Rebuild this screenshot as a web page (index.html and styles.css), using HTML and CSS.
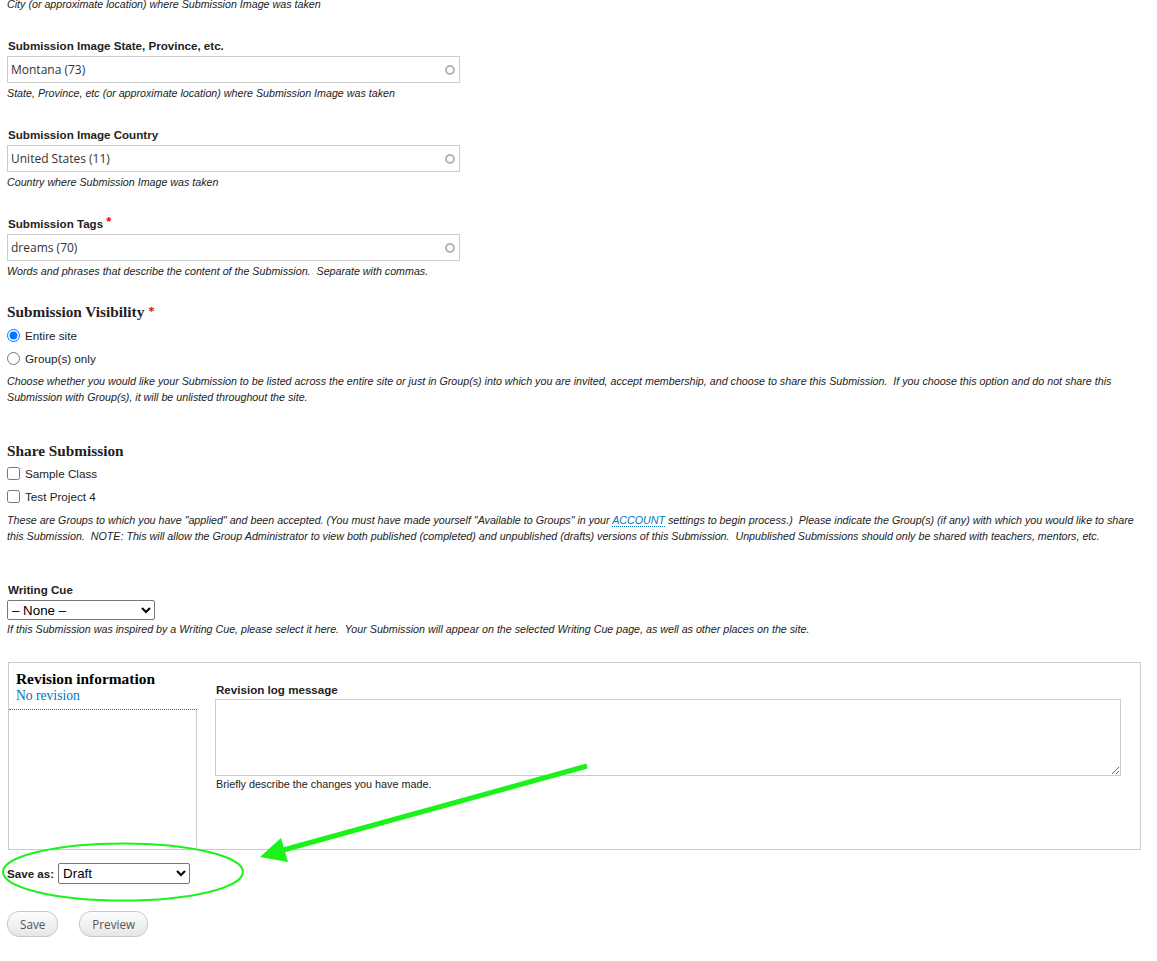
FILE: index.html
```html
<!DOCTYPE html>
<html lang="en">
<head>
<meta charset="utf-8">
<title>Submission</title>
<link rel="stylesheet" href="styles.css">
</head>
<body>
<div class="page">
  <div class="desc first">City (or approximate location) where Submission Image was taken</div>

  <div class="field">
    <label class="label">Submission Image State, Province, etc.</label>
    <div class="ac"><input class="text" type="text" value="Montana (73)"><span class="throbber"></span></div>
    <div class="desc">State, Province, etc (or approximate location) where Submission Image was taken</div>
  </div>

  <div class="field">
    <label class="label">Submission Image Country</label>
    <div class="ac"><input class="text" type="text" value="United States (11)"><span class="throbber"></span></div>
    <div class="desc">Country where Submission Image was taken</div>
  </div>

  <div class="field">
    <label class="label">Submission Tags <span class="req">*</span></label>
    <div class="ac"><input class="text" type="text" value="dreams (70)"><span class="throbber"></span></div>
    <div class="desc">Words and phrases that describe the content of the Submission.&nbsp; Separate with commas.</div>
  </div>

  <div class="group visibility">
    <div class="heading">Submission Visibility <span class="req">*</span></div>
    <label class="option"><input type="radio" name="vis" checked> Entire site</label>
    <label class="option"><input type="radio" name="vis"> Group(s) only</label>
    <div class="desc gdesc">Choose whether you would like your Submission to be listed across the entire site or just in Group(s) into which you are invited, accept membership, and choose to share this Submission.&nbsp; If you choose this option and do not share this Submission with Group(s), it will be unlisted throughout the site.</div>
  </div>

  <div class="group share">
    <div class="heading">Share Submission</div>
    <label class="option"><input type="checkbox"> Sample Class</label>
    <label class="option"><input type="checkbox"> Test Project 4</label>
    <div class="desc sdesc">These are Groups to which you have "applied" and been accepted. (You must have made yourself "Available to Groups" in your <a class="link" href="#">ACCOUNT</a> settings to begin process.)&nbsp; Please indicate the Group(s) (if any) with which you would like to share this Submission.&nbsp; NOTE: This will allow the Group Administrator to view both published (completed) and unpublished (drafts) versions of this Submission.&nbsp; Unpublished Submissions should only be shared with teachers, mentors, etc.</div>
  </div>

  <div class="cue">
    <label class="label">Writing Cue</label>
    <select class="sel cue-sel"><option>– None –</option></select>
    <div class="desc cdesc">If this Submission was inspired by a Writing Cue, please select it here.&nbsp; Your Submission will appear on the selected Writing Cue page, as well as other places on the site.</div>
  </div>

  <div class="vtabs">
    <div class="vt-menu">
      <div class="vt-tab">
        <div class="vt-title">Revision information</div>
        <div class="vt-summary">No revision</div>
      </div>
      <div class="vt-rest"></div>
    </div>
    <div class="vt-pane">
      <label class="label">Revision log message</label>
      <textarea class="log"></textarea>
      <div class="plain">Briefly describe the changes you have made.</div>
    </div>
  </div>

  <div class="saveas">
    <label class="label inline">Save as:</label>
    <select class="sel draft"><option>Draft</option></select>
  </div>

  <div class="actions">
    <button class="btn" type="button">Save</button>
    <button class="btn" type="button">Preview</button>
  </div>

  <svg class="annot" width="1157" height="961" viewBox="0 0 1157 961">
    <ellipse cx="123" cy="872" rx="120" ry="28.5" fill="none" stroke="#1af21a" stroke-width="2"/>
    <line x1="587" y1="766" x2="276" y2="852" stroke="#1af21a" stroke-width="5"/>
    <polygon points="260,857 281,838 288,862" fill="#1af21a"/>
  </svg>
</div>
</body>
</html>
```

FILE: styles.css
```css
html {
  overflow: hidden;
}
body {
  margin: 0;
  background: #fff;
  color: #222;
  font-family: "Liberation Sans", Arial, sans-serif;
  font-size: 12px;
}
.page {
  position: relative;
  display: flow-root;
  padding: 0 7px;
}
.desc {
  font-size: 10.7px;
  font-style: italic;
  line-height: 16px;
  margin-top: 2px;
}
.desc.first {
  margin-top: -4px;
}
.field {
  margin-top: 26px;
}
.label {
  display: block;
  font-weight: bold;
  font-size: 11.6px;
  line-height: 16px;
  margin-bottom: 2px;
  padding-left: 1px;
}
.req {
  color: #e00;
  font-weight: bold;
  font-size: 13px;
  position: relative;
  top: -2px;
}
.ac {
  position: relative;
  width: 453px;
}
.text {
  display: block;
  box-sizing: border-box;
  width: 453px;
  height: 27px;
  margin: 0;
  border: 1px solid #ccc;
  border-radius: 0;
  padding: 0 3px;
  font-family: "Open Sans", sans-serif;
  font-size: 12px;
  color: #333;
  outline: none;
}
.throbber {
  position: absolute;
  right: 5px;
  top: 8.5px;
  width: 6px;
  height: 6px;
  border: 2px solid #b4b4b4;
  border-radius: 50%;
}
.group {
  margin-top: 23px;
}
.group.share {
  margin-top: 36px;
}
.heading {
  font-family: "Liberation Serif", "Times New Roman", serif;
  font-weight: bold;
  font-size: 15.3px;
  line-height: 20px;
  margin-bottom: 1px;
}
.option {
  display: flex;
  align-items: center;
  height: 23px;
  font-size: 11.7px;
}
.option input {
  margin: 0 5px 0 0;
  width: 13px;
  height: 13px;
}
.gdesc {
  margin-top: 3px;
}
.sdesc {
  margin-top: 4px;
}
.link {
  color: #0074bd;
  text-decoration: none;
  border-bottom: 1px dotted #0074bd;
}
.cue {
  margin-top: 38px;
}
.sel {
  display: block;
  box-sizing: border-box;
  margin: 0;
  font-family: "Liberation Sans", Arial, sans-serif;
  font-size: 13.33px;
  color: #000;
  background: #fff;
  border: 1px solid #767676;
  border-radius: 2px;
}
.cue-sel {
  width: 148px;
  height: 20px;
}
.cdesc {
  margin-top: 1px;
}
.vtabs {
  margin-top: 25px;
  margin-left: 1px;
  width: 1133px;
  height: 188px;
  box-sizing: border-box;
  border: 1px solid #ccc;
  display: flex;
}
.vt-menu {
  width: 188px;
  flex: none;
  display: flex;
  flex-direction: column;
}
.vt-tab {
  padding: 7px 7px 5px 7px;
  border-bottom: 1px dotted #0074bd;
  font-family: "Liberation Serif", "Times New Roman", serif;
}
.vt-title {
  font-weight: bold;
  font-size: 15.4px;
  line-height: 17px;
  color: #000;
}
.vt-summary {
  font-size: 13.6px;
  line-height: 17px;
  color: #0074bd;
}
.vt-rest {
  flex: 1;
  border-right: 1px solid #ccc;
}
.vt-pane {
  flex: 1;
  padding: 19px 19px 0 18px;
}
.vt-pane .label {
  margin-bottom: 1px;
}
.log {
  display: block;
  box-sizing: border-box;
  width: 906px;
  height: 77px;
  margin: 0;
  border: 1px solid #ccc;
  border-radius: 0;
  outline: none;
}
.plain {
  font-size: 10.8px;
  line-height: 16px;
  padding-left: 1px;
}
.saveas {
  margin-top: 13px;
  display: flex;
  align-items: center;
  height: 21px;
}
.label.inline {
  display: inline-block;
  margin: 0 4px 0 0;
  padding-left: 0;
}
.draft {
  width: 132px;
  height: 21px;
}
.actions {
  margin-top: 27px;
  display: flex;
  gap: 21px;
}
.btn {
  box-sizing: border-box;
  height: 26px;
  padding: 0 12px;
  border: 1px solid #c8c8c8;
  border-radius: 12px;
  background: linear-gradient(#fdfdfd, #e6e6e6);
  font-family: "Open Sans", sans-serif;
  font-size: 11.7px;
  color: #555;
  margin: 0;
}
.annot {
  position: absolute;
  left: 0;
  top: 0;
  pointer-events: none;
}
```
